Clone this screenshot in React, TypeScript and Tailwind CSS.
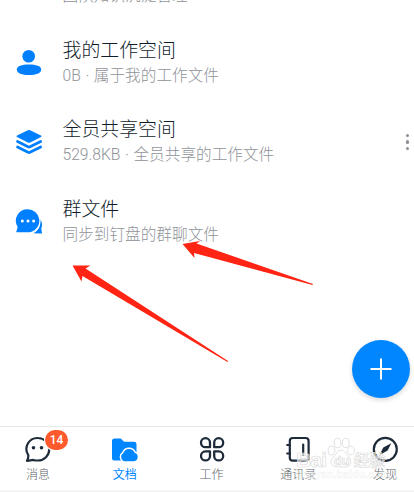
import React from "react";
import clsx from "clsx";

type SpaceItemProps = {
  title: string;
  desc: string;
  icon?: React.ReactNode;
  more?: boolean;
};

const PersonIcon = () => (
  <svg width="28" height="28" viewBox="0 0 28 28" fill="#007fff">
    <circle cx="13.700" cy="8.300" r="6.300" />
    <path d="M1.800 21.700C1.800 18 7 16.600 14 16.600S26.200 18 26.200 21.700 21 26.900 14 26.900 1.800 25.400 1.800 21.700Z" />
  </svg>
);

const LayersIcon = () => (
  <svg width="28" height="28" viewBox="0 0 28 28" fill="#007fff">
    <path d="M12.900 2.300Q14 1.700 15.200 2.300L26 7.500Q27.300 8.200 26 8.900L15.200 14.400Q14 15 12.900 14.400L2 8.900Q.8 8.200 2 7.500Z" />
    <path
      d="M2.500 13.500 13 18.800Q14 19.300 15 18.800L25.700 13.500M2.500 19 13 24.300Q14 24.800 15 24.300L25.700 19"
      fill="none"
      stroke="#007fff"
      strokeWidth="2.700"
      strokeLinecap="round"
    />
  </svg>
);

const GroupChatIcon = () => (
  <svg width="28" height="28" viewBox="0 0 28 28">
    <path
      d="M25.500 12.500C27.600 16 27.400 19.500 26.200 21.800L27 25.800Q27 26.600 26.200 26.500L18 26.300C23 24.200 26 19.500 25.500 12.500Z"
      fill="#007fff"
    />
    <path
      d="M12.800 2.300A11.500 11.500 0 0 1 16.500 24.700Q14.800 25.300 12.800 25.300H2.200Q1 25.200 1.500 24.100L2.700 20A11.500 11.500 0 0 1 12.800 2.300Z"
      fill="#007fff"
      stroke="#fff"
      strokeWidth="1.600"
      paintOrder="stroke"
    />
    <g fill="#fff">
      <circle cx="7.300" cy="13.900" r="1.500" />
      <circle cx="13" cy="13.900" r="1.500" />
      <circle cx="18.600" cy="13.900" r="1.500" />
    </g>
  </svg>
);

const MessageIcon = () => (
  <svg width="28" height="28" viewBox="0 0 28 28" fill="none">
    <path
      d="M14 3A11 11 0 1 1 14 25.500Q11 25.500 9.500 24.900L3 25.800Q4.500 23.500 4.300 20.100A11 11 0 0 1 14 3Z"
      stroke="#1d2b3a"
      strokeWidth="2.200"
      strokeLinejoin="round"
    />
    <circle cx="9.500" cy="12.800" r="1.800" fill="#1d2b3a" />
    <circle cx="17.500" cy="12.800" r="1.800" fill="#1d2b3a" />
  </svg>
);

const DocsIcon = () => (
  <svg width="28" height="28" viewBox="0 0 28 28" fill="#0086ff">
    <path d="M3.500 3.500H9Q10 3.500 10.700 4.300L12.200 6Q12.900 6.700 13.900 6.700H23Q25.500 6.700 25.500 9V25.500H3.500Q1 25.500 1 23V6Q1 3.500 3.500 3.500Z" />
    <path
      d="M14 26.300A4.500 4.500 0 0 1 12.400 18A6 6 0 0 1 23.600 17.700A4.400 4.400 0 0 1 22.300 26.300Z"
      stroke="#fff"
      strokeWidth="3"
      paintOrder="stroke"
    />
  </svg>
);

const WorkIcon = () => (
  <svg
    width="28"
    height="28"
    viewBox="0 0 28 28"
    fill="none"
    stroke="#1d2b3a"
    strokeWidth="2.300"
    strokeLinejoin="round"
  >
    <path d="M12 12.200H7.500A4.500 4.500 0 1 1 12 7.700Z" />
    <path d="M16.200 12.200V7.700A4.500 4.500 0 1 1 20.700 12.200Z" />
    <path d="M12 16.400V20.900A4.500 4.500 0 1 1 7.500 16.400Z" />
    <path d="M16.200 16.400H20.700A4.500 4.500 0 1 1 16.200 20.900Z" />
  </svg>
);

const ContactsIcon = () => (
  <svg
    width="28"
    height="28"
    viewBox="0 0 28 28"
    fill="none"
    stroke="#1d2b3a"
    strokeWidth="2.200"
    strokeLinecap="round"
  >
    <rect x="5.800" y="3" width="18.800" height="22.700" rx="3" />
    <path d="M19.200 9.500V20M3.200 10H5.800M3.200 18.500H5.800" />
  </svg>
);

const DiscoverIcon = () => (
  <svg width="28" height="28" viewBox="0 0 28 28" fill="none">
    <circle cx="14.300" cy="14.300" r="11.500" stroke="#1d2b3a" strokeWidth="2.200" />
    <path d="M20.300 8.300 16.600 15.600 8.300 20.300 12.300 12.500Z" fill="#1d2b3a" />
  </svg>
);

const spaces: SpaceItemProps[] = [
  { title: "团队空间", desc: "团队知识沉淀管理" },
  { title: "我的工作空间", desc: "0B · 属于我的工作文件", icon: <PersonIcon /> },
  {
    title: "全员共享空间",
    desc: "529.8KB · 全员共享的工作文件",
    icon: <LayersIcon />,
    more: true,
  },
  { title: "群文件", desc: "同步到钉盘的群聊文件", icon: <GroupChatIcon /> },
];

const tabs = [
  { label: "消息", icon: <MessageIcon />, badge: 14 },
  { label: "文档", icon: <DocsIcon />, active: true },
  { label: "工作", icon: <WorkIcon /> },
  { label: "通讯录", icon: <ContactsIcon /> },
  { label: "发现", icon: <DiscoverIcon /> },
];

const SpaceItem = ({ title, desc, icon, more }: SpaceItemProps) => {
  return (
    <div className="flex h-[79.500px] items-center pl-[15px] pr-[5px]">
      <div className="w-[47.500px] shrink-0">{icon}</div>
      <div className="flex-1 whitespace-nowrap">
        <p className="text-[18.900px] leading-[27px] font-light text-[#0f1c2a]">{title}</p>
        <p className="text-[15.650px] leading-6 font-light text-[#8f9398] [word-spacing:0.800px]">
          {desc}
        </p>
      </div>
      {more && (
        <div className="flex flex-col gap-[3px]">
          <span className="size-[3.500px] rounded-full bg-[#8a8e94]" />
          <span className="size-[3.500px] rounded-full bg-[#8a8e94]" />
          <span className="size-[3.500px] rounded-full bg-[#8a8e94]" />
        </div>
      )}
    </div>
  );
};

const Watermark = () => (
  <svg
    className="pointer-events-none absolute left-[290px] top-[434px]"
    width="124"
    height="50"
    viewBox="0 0 124 50"
  >
    <g fill="#fff" fillOpacity="0.600" stroke="#dcdcdc" strokeWidth="0.900">
      <ellipse cx="41.500" cy="16.500" rx="3.400" ry="4.300" />
      <ellipse cx="47.500" cy="9" rx="3.400" ry="4.700" />
      <ellipse cx="55.800" cy="9" rx="3.400" ry="4.700" />
      <ellipse cx="61" cy="16.500" rx="3.400" ry="4.300" />
      <path d="M51 16C55 16 56 20 59 23S61.500 33 55.500 33 47 33 43.500 32 40 26 43.500 23 47.500 16 51 16Z" />
      <g className="font-['Liberation_Sans','Noto_Sans_CJK_SC',sans-serif]" strokeWidth="0.700">
        <text x="6" y="33" fontSize="21" textLength="31" fontWeight="700">
          Bai
        </text>
        <text x="44" y="31" fontSize="12.500" fontWeight="700">
          du
        </text>
        <text x="64" y="32" fontSize="15.500" fontWeight="700">
          经验
        </text>
      </g>
    </g>
    <text
      x="6"
      y="43.500"
      fontSize="10.500"
      textLength="94"
      fill="#fff"
      fillOpacity="0.350"
      stroke="#ebebeb"
      strokeOpacity="0.700"
      strokeWidth="0.500"
      className="font-['Liberation_Sans',sans-serif] font-bold"
    >
      jingyan.baidu.com
    </text>
  </svg>
);

const App = () => {
  return (
    <div className="relative flex h-[492px] w-[414px] flex-col overflow-hidden bg-white font-[Roboto,'Noto_Sans_CJK_SC',sans-serif]">
      <main className="h-[426px] overflow-hidden">
        <div className="-mt-[57px]">
          {spaces.map((space) => (
            <SpaceItem key={space.title} {...space} />
          ))}
        </div>
      </main>

      <nav className="flex h-16 justify-between border-t border-[#e7e8e9] pl-[18px] pr-[9px] pt-[8px]">
        {tabs.map((tab) => (
          <div key={tab.label} className="relative flex w-10 flex-col items-center">
            {tab.icon}
            <span
              className={clsx(
                "whitespace-nowrap text-[12px] leading-6",
                tab.active ? "text-[#0086ff]" : "font-light text-[#5d646c]"
              )}
            >
              {tab.label}
            </span>
            {tab.badge && (
              <span className="absolute -top-[5px] left-[27px] flex h-5 w-[23px] items-center justify-center rounded-full bg-[#ff5a2b] text-[12px] font-medium text-white ring-1 ring-white">
                {tab.badge}
              </span>
            )}
          </div>
        ))}
      </nav>
      <div className="h-0.5 bg-[#f4f4f4]" />

      <button className="absolute left-[352px] top-[340px] flex size-[58px] items-center justify-center rounded-full bg-[#0086ff] shadow-[0_2px_5px_rgba(0,0,0,0.160)]">
        <svg width="22" height="22" viewBox="0 0 22 22" stroke="#fff" strokeWidth="2">
          <path d="M11 .5V21.500M.5 11H21.500" />
        </svg>
      </button>

      {/* pointers to the group files row */}
      <svg
        className="pointer-events-none absolute left-0 top-0"
        width="414"
        height="492"
        viewBox="0 0 414 492"
        fill="#ff2413"
      >
        <path d="M182.500 244 200 241 196.500 243.500 313 284 312.500 285 194 253 194.500 258Z" />
        <path d="M72.500 265.500 90.500 265.500 85.500 268.500 228 361 227.500 362 82.500 276 81.500 281.500Z" />
      </svg>

      <Watermark />
    </div>
  );
};

export default App;
